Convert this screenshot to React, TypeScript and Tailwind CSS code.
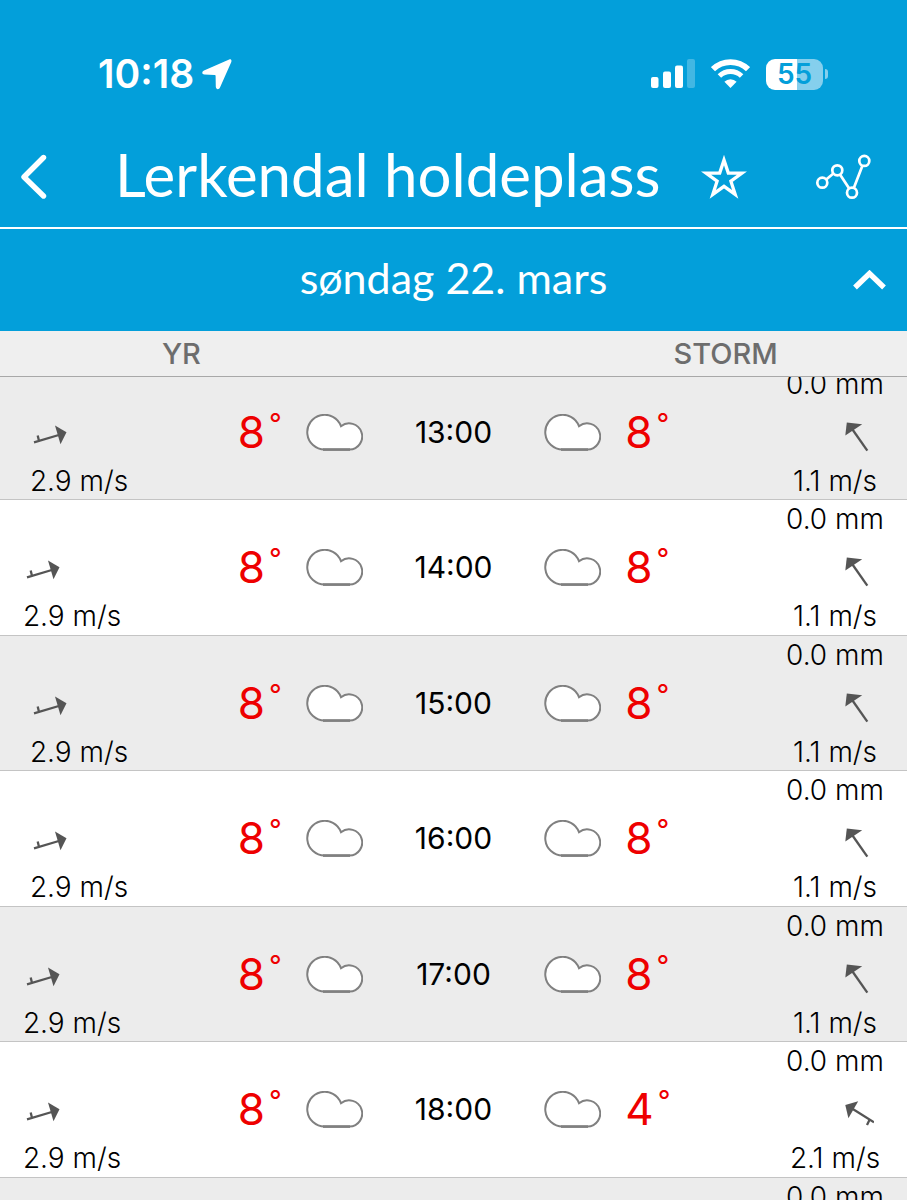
import React, { useLayoutEffect, useRef, useState } from 'react';

type WindKind = 'light' | 'calm' | 'breeze';

type Forecast = {
  temp: number;
  wind: string;
  kind: WindKind;
  rain?: string;
};

type Hour = {
  time: string;
  yr: Forecast;
  storm: Forecast;
  // The wind column sits closer to the edge for some hours
  tight?: boolean;
};

const yr: Forecast = { temp: 8, wind: '2.9 m/s', kind: 'light' };
const storm: Forecast = { temp: 8, wind: '1.1 m/s', kind: 'calm', rain: '0.0 mm' };
const stormEvening: Forecast = { temp: 4, wind: '2.1 m/s', kind: 'breeze', rain: '0.0 mm' };

const hours: Hour[] = [
  { time: '13:00', yr, storm },
  { time: '14:00', yr, storm, tight: true },
  { time: '15:00', yr, storm },
  { time: '16:00', yr, storm },
  { time: '17:00', yr, storm, tight: true },
  { time: '18:00', yr, storm: stormEvening, tight: true },
  { time: '19:00', yr, storm: stormEvening, tight: true },
];

function StatusBar() {
  return (
    <div className="flex h-32 items-start justify-between pt-[54px] pr-[79px] pl-[98px]">
      <div className="flex items-center gap-2">
        <span className="text-[39px] leading-10 font-semibold">10:18</span>
        <svg width="30" height="31" viewBox="0 0 30 31" fill="currentColor" aria-hidden="true">
          <path d="M27.2 .4 2 11.6C-.4 12.8-.2 15.4 2.4 15.6L12.6 16C13.2 16 13.6 16.4 13.6 17L13.8 27.8C14 30.6 16.8 31 18 28.6L29.2 3.2C30 1.2 29 -.4 27.2 .4Z" />
        </svg>
      </div>
      <div className="flex h-10 items-center">
        <svg width="44" height="30" viewBox="0 0 44 30" fill="currentColor" aria-hidden="true">
          <rect x="0" y="18" width="7.5" height="11" rx="2" />
          <rect x="12" y="12.5" width="8" height="16.5" rx="2" />
          <rect x="24" y="6.5" width="8" height="22.5" rx="2" />
          <rect x="36" y="0" width="8" height="29" rx="2" opacity="0.25" />
        </svg>
        <svg className="ml-4" width="39" height="30" viewBox="0 0 39 30" fill="none" stroke="currentColor" aria-hidden="true">
          <path d="M2 10.2A25 25 0 0 1 37 10.2" strokeWidth="5.8" />
          <path d="M8.4 17A16 16 0 0 1 30.6 17" strokeWidth="5" />
          <path d="M19.5 29 13.4 22.8A8.6 8.6 0 0 1 25.6 22.8Z" fill="currentColor" stroke="none" />
        </svg>
        <div className="ml-4 flex items-center gap-[2px]">
          <span className="flex h-[31px] w-[57px] items-center justify-center rounded-[9px] bg-linear-to-r from-white from-55% to-[#85cfed] to-55% text-[28px] leading-none font-semibold text-[#039fda]">
            55
          </span>
          <span className="h-[10px] w-[3px] rounded-r-full bg-[#85cfed]" />
        </div>
      </div>
    </div>
  );
}

function TitleBar() {
  return (
    <header className="flex h-[101px] items-center border-b-2 border-white pr-9 pb-1 pl-5 font-['Lato',sans-serif]">
      <button type="button" aria-label="Tilbake" className="w-[95px] shrink-0">
        <svg width="28" height="46" viewBox="0 0 28 46" fill="none" stroke="currentColor" strokeWidth="5.4" strokeLinecap="round" strokeLinejoin="round">
          <path d="M23.5 4.5 4 24 23.5 43" />
        </svg>
      </button>
      <h1 className="flex-1 pb-1 text-[60px] leading-[72px] font-normal whitespace-nowrap">Lerkendal holdeplass</h1>
      <button type="button" aria-label="Favoritt" className="mr-[69px] shrink-0">
        <svg width="46" height="46" viewBox="-23 -26 46 46" fill="none" stroke="currentColor" strokeWidth="3.3" strokeMiterlimit="10">
          <path d="M0-19 4.3-5.9H18L6.9 2.2 11.2 15.4 0 7.3-11.2 15.4-6.9 2.2-18-5.9H-4.3Z" />
        </svg>
      </button>
      <button type="button" aria-label="Graf" className="shrink-0">
        <svg className="overflow-visible" width="55" height="44" viewBox="0 -1 55 44" fill="none" stroke="currentColor" strokeWidth="2.7">
          <circle cx="6.3" cy="27.7" r="5" />
          <circle cx="21.3" cy="15.3" r="5" />
          <circle cx="36" cy="37.7" r="5" />
          <circle cx="48.3" cy="5.9" r="5" />
          <path d="M10.2 24.5 17.4 18.5M24 19.5 33.2 33.5M37.8 33 46.5 10.6" />
        </svg>
      </button>
    </header>
  );
}

function Cloud() {
  return (
    <svg className="shrink-0" width="57" height="37" viewBox="0 0 57 37" fill="#fff" stroke="#808080" strokeWidth="2" role="img" aria-label="Skyet">
      <path d="M18.5 35.6A17.4 17.4 0 1 1 35 12.2 13.1 13.1 0 1 1 43.5 35.6Z" />
      <path d="M17 35.6H44" strokeWidth="2.6" />
    </svg>
  );
}

const arrows = {
  light: (
    <svg className="mr-14" width="36" height="30" viewBox="0 2 36 30" fill="#555" stroke="#555" strokeWidth="2.3">
      <path d="M1 22.3 27.5 14.5M6 21 4.7 15.5" />
      <path d="M22 5.4 33.5 12.3 27.5 24.2Z" stroke="none" />
    </svg>
  ),
  calm: (
    <svg className="ml-12" width="30" height="30" viewBox="-1 0 30 30" fill="#555" stroke="#555" strokeWidth="2.3">
      <path d="M7.5 7.5 22.3 28.7" />
      <path d="M1.8 .5 17.2 2.3 .3 13.4Z" stroke="none" />
    </svg>
  ),
  breeze: (
    <svg className="ml-12" width="30" height="30" viewBox="-1 0 30 30" fill="#555" stroke="#555" strokeWidth="2.3">
      <path d="M7 9.5 29 23.3M24.7 20.5 22 26" />
      <path d="M.3 6 13.2 2.2 3.4 19.2Z" stroke="none" />
    </svg>
  ),
};

function Wind({ data }: { data: Forecast }) {
  return (
    <div className="flex h-[134px] w-[100px] flex-col items-center text-[28px] font-light whitespace-nowrap">
      <div className="h-[38px] leading-[38px]">{data.rain}</div>
      <div className="flex h-[60px] items-center pt-2">{arrows[data.kind]}</div>
      <div className="leading-9">{data.wind}</div>
    </div>
  );
}

function Temp({ value }: { value: number }) {
  return (
    <div className="flex w-[44px] items-start text-[#ee0000]">
      <span className="text-[44px] leading-[50px]">{value}</span>
      <span className="ml-1 text-[28px] leading-[34px]">°</span>
    </div>
  );
}

function HourRow({ hour }: { hour: Hour }) {
  return (
    <tr className="odd:h-[135px] odd:bg-[#ececec] even:h-[136px] even:bg-white">
      <td className="border-b border-[#c4c4c4] p-0 align-top">
        <div className={hour.tight ? 'flex items-center justify-between pl-[22px]' : 'flex items-center justify-between pl-[29px]'}>
          <Wind data={hour.yr} />
          <div className="flex items-center gap-6">
            <Temp value={hour.yr.temp} />
            <Cloud />
          </div>
        </div>
      </td>
      <th scope="row" className="border-b border-[#c4c4c4] p-0 text-center text-[30px] font-normal">
        {hour.time}
      </th>
      <td className="border-b border-[#c4c4c4] p-0 align-top">
        <div className="flex items-center justify-between pr-[22px]">
          <div className="flex items-center gap-6">
            <Cloud />
            <Temp value={hour.storm.temp} />
          </div>
          <Wind data={hour.storm} />
        </div>
      </td>
    </tr>
  );
}

export default function App() {
  const [open, setOpen] = useState(true);
  const listRef = useRef<HTMLDivElement>(null);

  useLayoutEffect(() => {
    if (listRef.current) listRef.current.scrollTop = 12;
  }, [open]);

  return (
    <div className="flex h-screen flex-col bg-white font-['Inter',sans-serif] text-black">
      <div className="shrink-0 bg-[#039fda] text-white">
        <StatusBar />
        <TitleBar />
        <button
          type="button"
          aria-expanded={open}
          onClick={() => setOpen(!open)}
          className="grid h-[102px] w-full grid-cols-[1fr_auto_1fr] items-center px-[21px] font-['Lato',sans-serif] text-[43px]"
        >
          <span />
          <span className="pb-1">søndag 22. mars</span>
          <svg className={open ? 'justify-self-end' : 'rotate-180 justify-self-end'} width="33" height="20" viewBox="0 0 33 20" fill="none" stroke="currentColor" strokeWidth="5.4">
            <path d="M2 17.5 16.5 3.5 31 17.5" />
          </svg>
        </button>
      </div>

      {open && (
        <div ref={listRef} className="min-h-0 flex-1 overflow-y-auto [scrollbar-width:none]">
          <table className="w-full table-fixed border-separate border-spacing-0">
            <thead className="sticky top-0 z-10 bg-[#efefef]">
              <tr className="h-[46px] text-[29px] leading-8 text-[#6d6d6d]">
                <th scope="col" className="w-2/5 border-b border-[#a8a8a8] p-0 font-medium">YR</th>
                <td className="w-1/5 border-b border-[#a8a8a8] p-0" />
                <th scope="col" className="w-2/5 border-b border-[#a8a8a8] p-0 font-medium">STORM</th>
              </tr>
            </thead>
            <tbody>
              {hours.map((hour) => (
                <HourRow key={hour.time} hour={hour} />
              ))}
            </tbody>
          </table>
        </div>
      )}
    </div>
  );
}
